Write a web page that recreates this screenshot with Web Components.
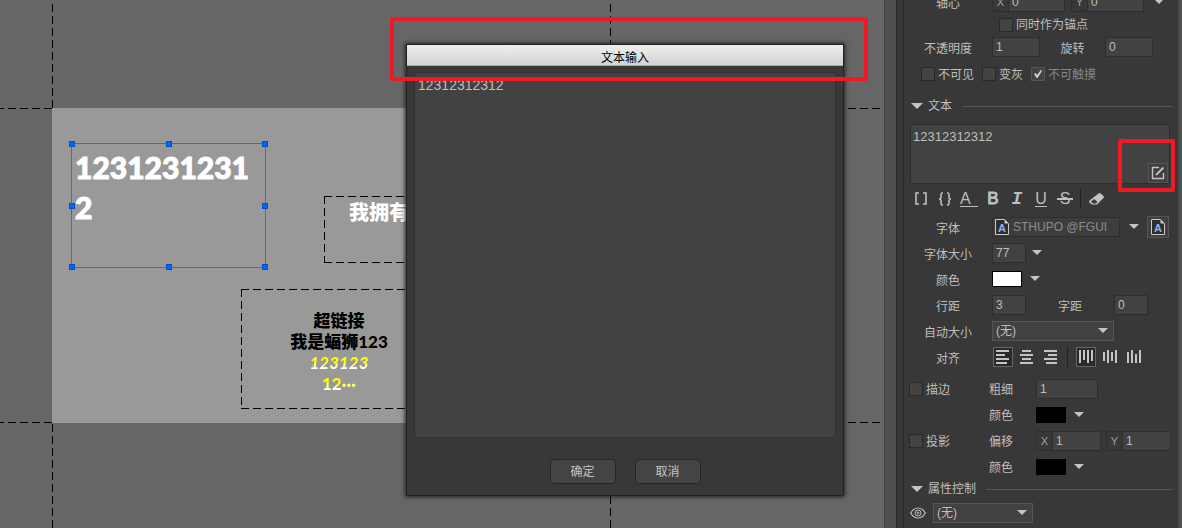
<!DOCTYPE html>
<html lang="zh-CN">
<head>
<meta charset="utf-8">
<title>文本输入</title>
<style>
html,body{height:100%}
body{margin:0;overflow:hidden;background:#383838;color:#bebebe;font:12px/16px "Liberation Sans","Noto Sans CJK SC",sans-serif}
</style>
</head>
<body>
<editor-app></editor-app>

<template id="t-app">
<style>
:host{display:flex;height:100vh;position:relative;overflow:hidden}
stage-view{flex:1;min-width:0}
.track{width:11px;background:#505050;border-left:1px solid #444}
.split{width:6px;background:#383838;border:solid #282828;border-width:0 1px}
inspector-panel{width:274px}
.edge{width:4px;background:#505050;border-left:1px solid #444;box-sizing:border-box}
</style>
<stage-view></stage-view>
<div class="track"></div><div class="split"></div>
<inspector-panel></inspector-panel>
<div class="edge"></div>
<text-dialog heading="文本输入" value="12312312312"></text-dialog>
</template>

<template id="t-stage">
<style>
:host{display:block;position:relative;overflow:hidden;background:#666;font-family:Lato,"Noto Sans CJK SC",sans-serif;font-weight:900}
.h,.v{position:absolute}
.h{left:0;right:0;height:1px;background:repeating-linear-gradient(90deg,#000 0 4px,transparent 4px 8px,#000 8px 12px)}
.v{top:0;bottom:0;width:1px;background:repeating-linear-gradient(transparent 0 4px,#000 4px 12px)}
.page{position:absolute;left:52px;top:108px;width:558px;height:315px;background:#999}
.box{position:absolute;box-sizing:border-box}
.dash{--h:repeating-linear-gradient(90deg,#000 0 8px,transparent 8px 12px);--v:repeating-linear-gradient(#000 0 8px,transparent 8px 12px);
 background:var(--h) top/100% 1px no-repeat,var(--h) bottom/100% 1px no-repeat,var(--v) left/1px 100% no-repeat,var(--v) right/1px 100% no-repeat}
.sel{left:19px;top:35px;width:195px;height:125px;border:1px solid #2b72d8;padding:3px;color:#fff;font-size:30px;line-height:40px;word-break:break-all;-webkit-text-stroke:1px #fff}
.sel i{position:absolute;width:6px;height:6px;box-sizing:border-box;background:#06f;border:1px solid #0050cc;margin:-3px}
.own{left:272px;top:88px;width:180px;height:67px;padding:2px 25px;color:#fff;font-size:20px;line-height:28px;white-space:nowrap}
.rich{left:189px;top:181px;width:196px;height:120px;padding-top:21px;text-align:center;color:#000;font-size:17px;line-height:21px}
.rich a{color:inherit;text-decoration:none}
.rich .y{color:transparent;background:linear-gradient(#ff0 45%,#fff 80%);background-clip:text;-webkit-background-clip:text}
.it{font-style:italic}
</style>
<div class="h" style="top:108px"></div><div class="h" style="top:422px"></div>
<div class="v" style="left:52px"></div><div class="v" style="left:610px"></div>
<div class="page">
 <div class="box sel">1231231231<wbr>2
  <i style="left:0;top:0"></i><i style="left:50%;top:0"></i><i style="left:100%;top:0"></i>
  <i style="left:0;top:50%"></i><i style="left:100%;top:50%"></i>
  <i style="left:0;top:100%"></i><i style="left:50%;top:100%"></i><i style="left:100%;top:100%"></i>
 </div>
 <div class="box dash own">我拥有</div>
 <div class="box dash rich"><div><a href="#">超链接</a></div><div>我是蝠狮123</div><div class="y it">123123</div><div class="y">12···</div></div>
</div>
</template>

<template id="t-dialog">
<style>
:host{display:block;position:absolute;left:406px;top:44px;width:438px;background:#383838;border:1px solid #222;box-sizing:border-box;box-shadow:0 0 4px 1px #222}
h1{margin:0;height:21px;font:12px/26px "Liberation Sans","Noto Sans CJK SC",sans-serif;color:#000;text-align:center;background:linear-gradient(#efefef,#d2d2d2);border-bottom:1px solid #aaa;box-sizing:border-box}
textarea{display:block;box-sizing:border-box;width:calc(100% - 14px);height:366px;margin:6px 7px 0;padding:4px 3px;resize:none;outline:0;border:1px solid #303030;background:#424242;color:#bebebe;font:14px/16px "Liberation Sans",sans-serif}
footer{display:flex;justify-content:center;gap:19px;padding:21px 0 11px}
button{width:66px;height:25px;padding:2px 0 0;border:1px solid #272727;border-radius:4px;background:#444;color:#c4c4c4;font:12px/21px "Liberation Sans","Noto Sans CJK SC",sans-serif}
mark-frame{left:-17px;top:-28px;width:478px;height:64px}
</style>
<h1></h1><textarea aria-label="文本输入"></textarea>
<footer><button>确定</button><button>取消</button></footer>
<mark-frame></mark-frame>
</template>

<template id="t-panel">
<style>
:host{display:block;overflow:hidden;background:#383838}
.scrolled{margin-top:-11px}
.row{display:grid;grid-template-columns:88px 1fr;align-items:center;height:26px}
.fx>.n{text-align:center;padding-top:2px}
.row>span{text-align:center;padding-top:4px}
.c{display:flex;align-items:center}
.anchor{height:19px;display:flex;align-items:center;padding-left:95px}
.flags{height:28px;display:flex;align-items:center;gap:8px;padding-left:17px}
.l{text-align:center;padding-top:4px}
.text{position:relative;margin:0 8px 0 6px}
.text textarea{display:block;width:100%;height:60px;box-sizing:border-box;resize:none;outline:0;border:1px solid #2e2e2e;background:#424242;color:#bebebe;padding:4px 2px;font:13px/16px "Liberation Sans",sans-serif}
.edit{position:absolute;right:2px;bottom:1px}
mark-frame{right:-5px;bottom:-8px;width:57px;height:53px}
button{padding:0;border:0;background:none;color:#bebebe;display:grid;place-items:center;width:20px;height:20px;box-sizing:border-box;font:16px/20px "Liberation Sans",sans-serif}
button.on{border:1px solid #666;background:#2a2a2a}
button.lit{border:1px solid #555;background:#404040}
.tools{display:flex;align-items:center;height:30px;padding-left:5px}
.tools button{width:24px}
.tools .b{font-size:17px;-webkit-text-stroke:1px #bebebe}
.tools .i{font:italic bold 18px/20px "Liberation Mono",monospace}
.u{border-bottom:1px solid #bebebe;line-height:14px}
.a{width:18px;text-align:left}
.sep{width:1px;height:20px;background:#222}
.font{display:flex;align-items:center;gap:4px;width:128px;height:20px;box-sizing:border-box;border:1px solid #2e2e2e;background:#3d3d3d;padding-left:2px}
.font input{flex:1;min-width:0;border:0;background:none;padding:0;outline:0;color:#8c8c8c;font:12px/16px "Liberation Sans",sans-serif}
.align{gap:4px;padding-left:1px}
.fx{display:grid;grid-template-columns:80px 24px 1fr;align-items:center;height:26px;padding-left:5px}
.fx .c{padding-left:23px}
.first{margin-top:6px}
.vis{display:flex;align-items:center;gap:7px;height:26px;padding:2px 0 0 6px}
</style>
<div class="scrolled">
 <div class="row"><span>轴心</span><div class="c" style="gap:6px"><num-field prefix="X" value="0" w="73"></num-field><num-field prefix="Y" value="0" w="73"></num-field><drop-arrow style="margin-left:4px"></drop-arrow></div></div>
 <div class="anchor"><tick-box label="同时作为锚点"></tick-box></div>
 <div class="row"><span>不透明度</span><div class="c"><num-field value="1" w="48" name="不透明度"></num-field><span class="l" style="width:65px">旋转</span><num-field value="0" w="48" name="旋转"></num-field></div></div>
 <div class="flags"><tick-box label="不可见"></tick-box><tick-box label="变灰"></tick-box><tick-box label="不可触摸" on></tick-box></div>
 <section-head style="height:36px">文本</section-head>
 <div class="text"><textarea aria-label="文本">12312312312</textarea>
  <button class="edit lit" aria-label="编辑"><svg width="14" height="14" viewBox="0 0 14 14" fill="none" stroke="#c4c4c4"><path d="M8 1.5H1.5v11h11V7" stroke-width="1.4"/><path d="M5 9l7.5-7.500" stroke-width="1.8"/></svg></button>
  <mark-frame></mark-frame></div>
 <div class="tools">
  <button aria-label="方括号"><svg width="12" height="14" fill="none" stroke="#bebebe" stroke-width="1.6"><path d="M4 1H1v11h3M8 1h3v11H8"/></svg></button>
  <button aria-label="花括号"><svg width="14" height="15" fill="none" stroke="#bebebe" stroke-width="1.6"><path d="M5 1H4Q3 1 3 3v2q0 2-2 2q2 0 2 2v2q0 2 1 2h1M9 1h1q1 0 1 2v2q0 2 2 2q-2 0-2 2v2q0 2-1 2H9"/></svg></button>
  <button aria-label="文字颜色"><span class="u a">A</span></button>
  <button class="b">B</button>
  <button class="i">I</button>
  <button><span class="u">U</span></button>
  <button aria-label="删除线" style="grid-template-areas:'x'"><span style="grid-area:x">S</span><svg style="grid-area:x" width="16" height="2"><path d="M0 1h16" stroke="#bebebe" stroke-width="2"/></svg></button>
  <div class="sep" style="margin:0 3px"></div>
  <button aria-label="清除格式"><svg width="17" height="14" viewBox="0 0 17 14"><path d="M10.500 1.500q1-1 2 0l3 2.500q1 1 0 2L9 12.500H4L1.500 10.500q-1-1 0-2z" fill="#c4c4c4"/><path d="M3 9.500l3-2.500 3.500 3-1.500 1.500H5z" fill="#383838"/></svg></button>
 </div>
 <div class="row"><span>字体</span><div class="c"><div class="font"><font-icon></font-icon><input value="STHUPO @FGUI" aria-label="字体"></div><drop-arrow style="margin:0 8px 0 9px"></drop-arrow><button class="lit" aria-label="选择字体" style="width:22px;height:22px"><font-icon></font-icon></button></div></div>
 <div class="row"><span>字体大小</span><div class="c"><num-field value="77" w="34" name="字体大小"></num-field><drop-arrow style="margin-left:6px"></drop-arrow></div></div>
 <div class="row"><span>颜色</span><div class="c"><color-pick value="#ffffff"></color-pick></div></div>
 <div class="row"><span>行距</span><div class="c"><num-field value="3" w="34" name="行距"></num-field><span class="l" style="width:88px">字距</span><num-field value="0" w="34" name="字距"></num-field></div></div>
 <div class="row"><span>自动大小</span><div class="c"><pick-list w="122" name="自动大小"></pick-list></div></div>
 <div class="row"><span>对齐</span><div class="c align" id="align"></div></div>
 <div class="fx first"><tick-box label="描边"></tick-box><span class="n">粗细</span><div class="c"><num-field value="1" w="62" name="粗细"></num-field></div></div>
 <div class="fx"><span></span><span class="n">颜色</span><div class="c"><color-pick value="#000000"></color-pick></div></div>
 <div class="fx"><tick-box label="投影"></tick-box><span class="n">偏移</span><div class="c" style="gap:5px"><num-field prefix="X" value="1" w="65"></num-field><num-field prefix="Y" value="1" w="65"></num-field></div></div>
 <div class="fx"><span></span><span class="n">颜色</span><div class="c"><color-pick value="#000000"></color-pick></div></div>
 <section-head style="height:18px">属性控制</section-head>
 <div class="vis"><svg width="16" height="12" viewBox="0 0 16 12" fill="none" stroke="#bebebe"><path d="M.7 6Q3.500 1 8 1t7.300 5Q12.500 11 8 11T.7 6z" stroke-width="1.200"/><circle cx="8" cy="6" r="3"/><circle cx="8" cy="6" r="1"/></svg><pick-list w="100" name="属性控制"></pick-list></div>
</div>
</template>

<script>
const def=(name,build)=>customElements.define(name,class extends HTMLElement{
  constructor(){super();this.attachShadow({mode:'open'});}
  connectedCallback(){if(!this.shadowRoot.firstChild)build(this,this.shadowRoot);}
});
const tpl=id=>document.getElementById(id).content.cloneNode(true);
const FONT='"Liberation Sans","Noto Sans CJK SC",sans-serif';

def('mark-frame',(el,r)=>r.innerHTML=`<style>:host{position:absolute;z-index:3;box-sizing:border-box;border:4px solid #ed1c24;border-radius:2px;pointer-events:none}</style>`);

def('drop-arrow',(el,r)=>r.innerHTML=`<style>:host{display:block;width:10px;height:6px}svg{display:block}</style><svg width="10" height="6"><path d="M0 0h10L5 5z" fill="#c4c4c4"/></svg>`);

def('font-icon',(el,r)=>r.innerHTML=`<style>:host{display:block}svg{display:block}</style><svg width="14" height="16" viewBox="0 0 14 16"><path d="M.5.5h9l4 4v11H.5z" fill="#2e2e2e" stroke="#c8c8c8"/><path d="M9.500.500v4h4z" fill="#c8c8c8"/><text x="7" y="13" text-anchor="middle" font-family="Liberation Sans" font-weight="bold" font-size="11" fill="#8fb0f5">A</text></svg>`);

def('num-field',(el,r)=>{
  const p=el.getAttribute('prefix');
  r.innerHTML=`<style>:host{display:flex;width:${el.getAttribute('w')}px;height:20px;box-sizing:border-box;border:1px solid #2e2e2e;background:#424242}
  label{width:15px;background:#383838;border-right:1px solid #2e2e2e;color:#a0a0a0;font:11px/18px ${FONT};text-align:center;flex:none}
  input{flex:1;min-width:0;width:0;border:0;outline:0;background:none;color:#bebebe;padding:0 2px 0 3px;font:12px/18px ${FONT}}</style>
  ${p?`<label for="i">${p}</label>`:''}<input id="i" value="${el.getAttribute('value')}"${p?'':` aria-label="${el.getAttribute('name')}"`}>`;
});

def('tick-box',(el,r)=>{
  const on=el.hasAttribute('on');
  r.innerHTML=`<style>:host{display:block}label{display:flex;align-items:center;gap:3px;line-height:16px;color:${on?'#858585':'#bebebe'}}span{padding-top:1px}
  input{appearance:none;margin:0;width:14px;height:14px;box-sizing:border-box;border:1px solid #292929;background:#434343;flex:none}
  input:checked{border-color:#555}
  input:checked::before{content:"";display:block;width:8px;height:8px;margin:2px;background:#d0d0d0;clip-path:polygon(0 50%,20% 38%,38% 62%,85% 0,100% 10%,45% 100%,32% 100%)}</style>
  <label><input type="checkbox"${on?' checked':''}><span>${el.getAttribute('label')}</span></label>`;
});

def('pick-list',(el,r)=>r.innerHTML=`<style>:host{display:grid;width:${el.getAttribute('w')}px;height:20px;align-items:center}
  select{grid-area:1/1;appearance:none;width:100%;height:20px;box-sizing:border-box;margin:0;padding:0 20px 0 3px;border:1px solid #555;border-radius:0;background:#424242;color:#bebebe;outline:0;font:12px/18px ${FONT}}
  drop-arrow{grid-area:1/1;justify-self:end;margin-right:6px;pointer-events:none}</style>
  <select aria-label="${el.getAttribute('name')}"><option>(无)</option></select><drop-arrow></drop-arrow>`);

def('color-pick',(el,r)=>r.innerHTML=`<style>:host{display:flex;align-items:center;gap:8px}
  input{appearance:none;width:30px;height:16px;box-sizing:border-box;padding:0;border:1px solid #000;background:#000;display:block}
  input::-webkit-color-swatch-wrapper{padding:0}input::-webkit-color-swatch{border:0;border-radius:0}</style>
  <input type="color" value="${el.getAttribute('value')}" aria-label="颜色"><drop-arrow></drop-arrow>`);

def('section-head',(el,r)=>r.innerHTML=`<style>:host{display:flex;align-items:center;padding:0 5px 0 7px}svg{flex:none;margin-right:5px}hr{flex:1;border:0;height:1px;background:#555;margin:0 0 0 10px}</style>
  <svg width="12" height="7"><path d="M0 0h12L6 6z" fill="#c4c4c4"/></svg><slot></slot><hr>`);

def('stage-view',(el,r)=>r.append(tpl('t-stage')));

def('text-dialog',(el,r)=>{
  r.append(tpl('t-dialog'));
  r.querySelector('h1').textContent=el.getAttribute('heading');
  r.querySelector('textarea').value=el.getAttribute('value');
});

def('inspector-panel',(el,r)=>{
  r.append(tpl('t-panel'));
  const icons=[
    ['左对齐','M0 1h13M0 5h9M0 9h13M0 13h11'],['居中','M2 1h9M0 5h13M2 9h9M0 13h13'],['右对齐','M0 1h13M4 5h9M0 9h13M2 13h11'],
    ['顶部','M1 0v13M5 0v10M9 0v13M13 0v11'],['中部','M1 2v9M5 0v13M9 2v9M13 0v13'],['底部','M1 2v11M5 0v13M9 4v9M13 0v13']];
  r.getElementById('align').innerHTML=icons.map(([n,d],i)=>
    `${i==3?'<div class="sep" style="margin:0 4px 0 2px"></div>':''}<button aria-label="${n}"${i%3?'':' class="on"'}><svg width="14" height="14" stroke="#c4c4c4" stroke-width="2"><path d="${d}"/></svg></button>`).join('');
});

def('editor-app',(el,r)=>r.append(tpl('t-app')));
</script>
</body>
</html>
